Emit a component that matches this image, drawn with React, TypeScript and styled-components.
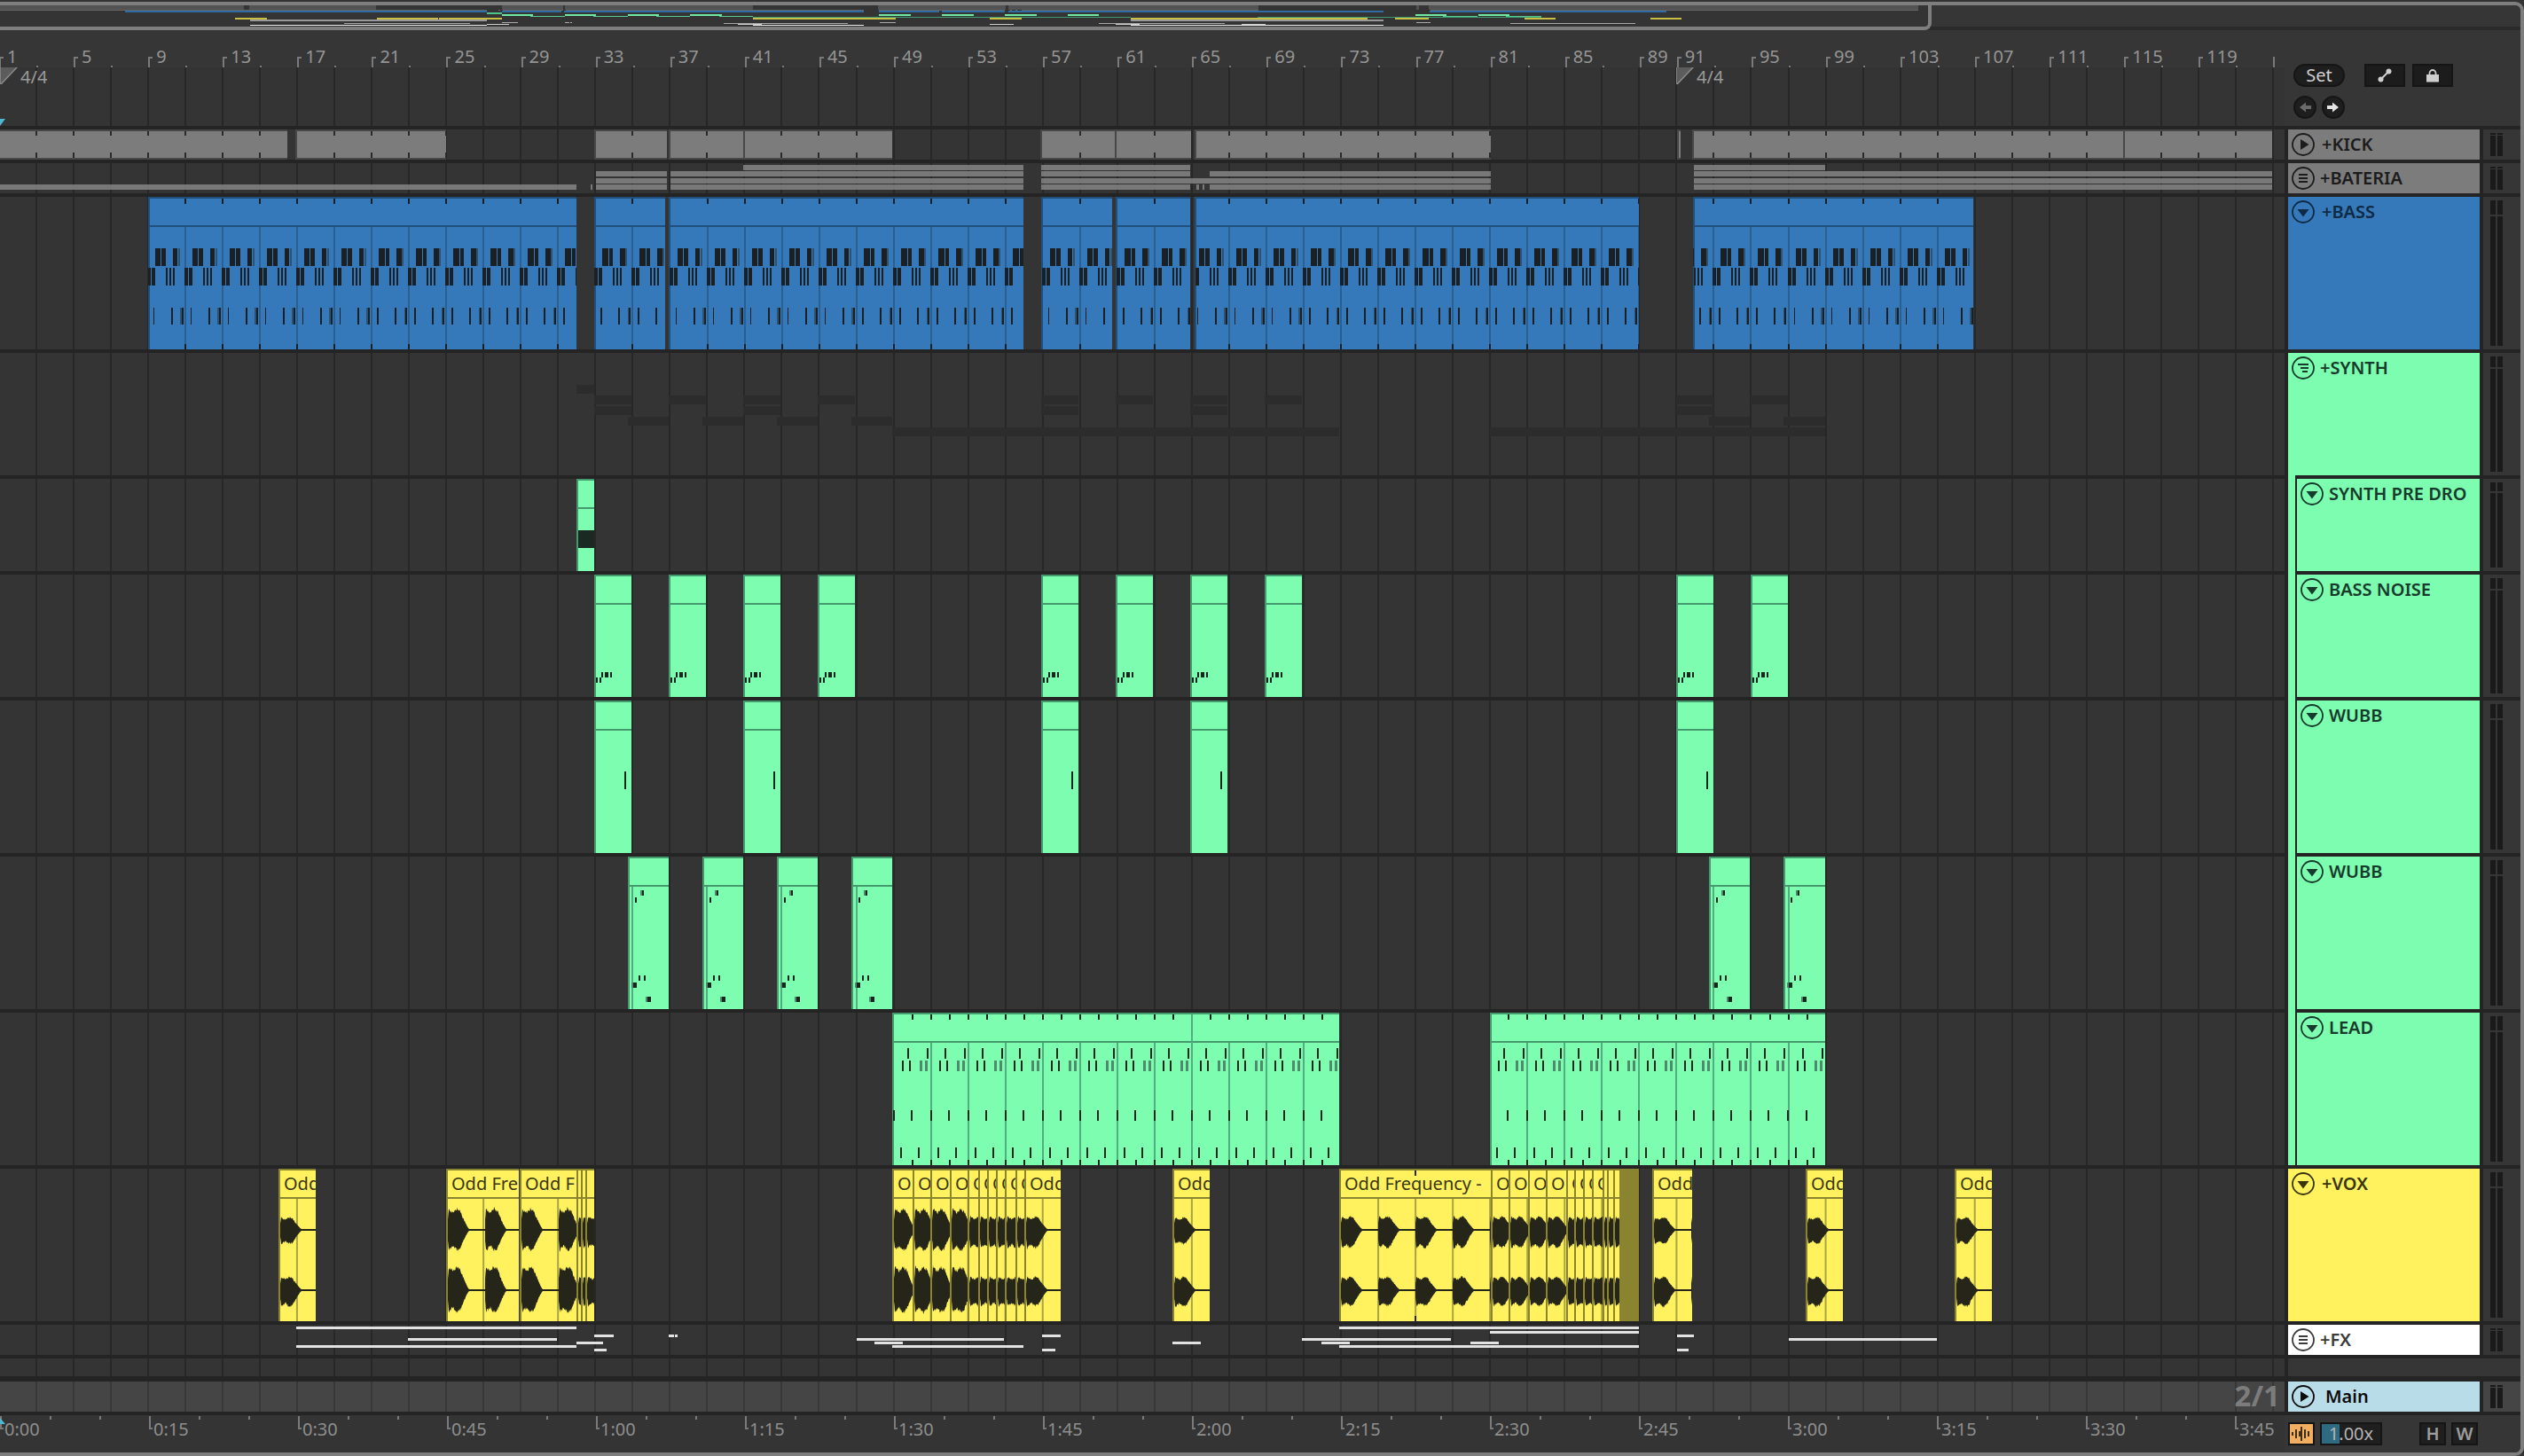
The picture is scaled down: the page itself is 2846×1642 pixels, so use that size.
import React from 'react';
import styled, { createGlobalStyle } from 'styled-components';

const GlobalStyles = createGlobalStyle`
  html, body { margin: 0; padding: 0; background: #333333; }
  body { font-family: "Noto Sans", "Liberation Sans", sans-serif; }
  * { box-sizing: border-box; }
`;

type Tone = 'blue' | 'green' | 'yellow' | 'gray' | 'white' | 'sky';

const tones: Record<Tone, { fill: string; edge: string; line: string; ink: string; dim: string; text: string }> = {
  blue: { fill: '#3679bb', edge: '#1f4f7c', line: '#2a5f92', ink: '#1a2024', dim: '#2d5272', text: '#0f2a44' },
  green: { fill: '#7dfdb0', edge: '#449a6c', line: '#52ad80', ink: '#16261f', dim: '#4f8a6c', text: '#173a2b' },
  yellow: { fill: '#fff25e', edge: '#8a8430', line: '#a9a443', ink: '#25251a', dim: '#6b6a2c', text: '#39360f' },
  gray: { fill: '#7c7c7c', edge: '#454545', line: '#444444', ink: '#2a2a2a', dim: '#555555', text: '#1c1c1c' },
  white: { fill: '#ffffff', edge: '#444444', line: '#444444', ink: '#222222', dim: '#555555', text: '#3c3c3c' },
  sky: { fill: '#b9dde8', edge: '#444444', line: '#444444', ink: '#222222', dim: '#555555', text: '#0c0c0c' },
};

const STEP = 42.04;
const GRID0 = -2.4;
const OV = 0.8443;

const barX = (bar: number) => -1 + (bar - 1) * 21.02;

const Page = styled.div`
  width: 2846px;
  height: 1642px;
  padding-top: 2px;
  background: #333333;
  overflow: hidden;
`;

const Window = styled.div`
  height: 1640px;
  display: flex;
  flex-direction: column;
  border-top: 4px solid #7e7e7e;
  border-right: 4px solid #7e7e7e;
  border-bottom: 4px solid #7e7e7e;
  border-top-right-radius: 10px;
  border-bottom-right-radius: 10px;
  background: #363636;
  overflow: hidden;
`;

const Overview = styled.div`
  height: 28px;
  flex: none;
  display: flex;
  background: #363636;
  border-bottom: 4px solid #2a2a2a;
`;

const OverviewFrame = styled.div`
  width: 2178px;
  height: 28px;
  flex: none;
  background: #343434;
  border-right: 4px solid #7e7e7e;
  border-bottom: 4px solid #7e7e7e;
  border-bottom-right-radius: 8px;
`;

const TopSection = styled.div`
  height: 112px;
  flex: none;
  display: grid;
  grid-template-columns: 2576px 266px;
  padding-bottom: 4px;
  background: #242424;
`;

const TopLeft = styled.div`
  display: flex;
  flex-direction: column;
`;

const BarRuler = styled.div`
  height: 42px;
  position: relative;
  background: #363636;
  overflow: hidden;
`;

const RulerLabel = styled.span.attrs<{ $x: number }>(p => ({ style: { left: p.$x } }))<{ $x: number }>`
  position: absolute;
  top: 15px;
  font-size: 20px;
  line-height: 30px;
  color: #959595;
  white-space: nowrap;
`;

const RulerTick = styled.i.attrs<{ $x: number }>(p => ({ style: { left: p.$x } }))<{ $x: number; $hook?: boolean }>`
  position: absolute;
  bottom: 0;
  width: ${p => (p.$hook ? 5 : 2)}px;
  height: ${p => (p.$hook ? 12 : 2)}px;
  border-left: 2px solid #7a7a7a;
  border-top: ${p => (p.$hook ? '2px solid #7a7a7a' : 'none')};
`;

const LastTick = styled(RulerTick)`
  height: 12px;
`;

const Lane = styled.div<{ $bright?: boolean }>`
  position: relative;
  overflow: hidden;
  background-color: ${p => (p.$bright ? '#454545' : '#343434')};
  background-image: repeating-linear-gradient(
    90deg,
    ${p => (p.$bright ? '#383838' : '#272727')} 0,
    ${p => (p.$bright ? '#383838' : '#272727')} 2px,
    transparent 2px,
    transparent ${STEP}px
  );
  background-position-x: ${GRID0}px;
  background-size: 2568px 100%;
  background-repeat: no-repeat;
`;

const LocatorLane = styled(Lane)`
  flex: 1;
`;

const Signature = styled.div.attrs<{ $x: number }>(p => ({ style: { left: p.$x } }))<{ $x: number }>`
  position: absolute;
  top: -1px;
  display: flex;
  gap: 3px;
  color: #9a9a9a;
  font-size: 20px;
  line-height: 24px;
`;

const PlayMarker = styled.svg`
  position: absolute;
  left: 0;
  top: 58px;
`;

const TimeMarker = styled(PlayMarker)`
  top: 3px;
`;

const TopPanel = styled.div`
  background: #363636;
  padding: 38px 0 0 10px;
  display: flex;
  flex-direction: column;
  gap: 10px;
`;

const PanelRow = styled.div`
  display: flex;
  gap: 6px;
  height: 26px;
`;

const SetButton = styled.div`
  width: 58px;
  height: 26px;
  margin-right: 16px;
  border: 2px solid #151515;
  border-radius: 13px;
  background: #1e1e1e;
  color: #cfcfcf;
  font-size: 20px;
  line-height: 21px;
  text-align: center;
`;

const ViewButton = styled.div`
  width: 46px;
  height: 26px;
  margin-right: 2px;
  display: flex;
  align-items: center;
  justify-content: center;
  border: 2px solid #151515;
  background: #1c1c1c;
`;

const RoundButton = styled.div`
  width: 26px;
  height: 26px;
  border: 2px solid #151515;
  border-radius: 50%;
  background: #1e1e1e;
  display: flex;
  align-items: center;
  justify-content: center;
`;

const Row = styled.div<{ $h: number; $gap?: number }>`
  height: ${p => p.$h + (p.$gap ?? 4)}px;
  flex: none;
  display: grid;
  grid-template-columns: 2576px 216px 42px;
  column-gap: 4px;
  padding-bottom: ${p => p.$gap ?? 4}px;
  background: #242424;
`;

const Head = styled.div<{ $tone: Tone; $child?: boolean; $strip?: boolean; $gap: number }>`
  position: relative;
  display: flex;
  align-items: flex-start;
  gap: ${p => p.$gap}px;
  padding: 4px 0 0 ${p => (p.$child ? 14 : 4)}px;
  background: ${p => tones[p.$tone].fill};
  color: ${p => tones[p.$tone].text};
  font-size: 20px;
  font-weight: 600;
  line-height: 26px;
  white-space: nowrap;

  /* group strip on the left of nested tracks */
  ${p =>
    p.$child &&
    `
    &::before {
      content: '';
      position: absolute;
      left: 8px;
      top: 0;
      bottom: 0;
      width: 2px;
      background: #242424;
    }
  `}
  ${p =>
    p.$strip &&
    `
    &::after {
      content: '';
      position: absolute;
      left: 0;
      bottom: -4px;
      width: 8px;
      height: 4px;
      background: ${tones[p.$tone].fill};
    }
  `}
`;

const MeterCell = styled.div<{ $bright?: boolean }>`
  display: flex;
  gap: 2px;
  padding: 4px 0 4px 8px;
  background: ${p => (p.$bright ? '#454545' : '#363636')};
`;

const MeterBar = styled.div<{ $top: number }>`
  width: 6px;
  display: flex;
  flex-direction: column;
  gap: ${p => (p.$top < 4 ? 1 : 2)}px;

  &::before {
    content: '';
    height: ${p => p.$top}px;
    background: #1a1a1a;
  }
  &::after {
    content: '';
    flex: 1;
    background: #1a1a1a;
  }
`;

const BlankPanel = styled.div`
  grid-column: 2 / 4;
  background: #363636;
`;

const ClipBox = styled.div.attrs<{ $x: number; $w: number }>(p => ({ style: { left: p.$x, width: p.$w } }))<{
  $x: number;
  $w: number;
  $tone: Tone;
}>`
  position: absolute;
  top: 0;
  bottom: 0;
  overflow: hidden;
  background: ${p => tones[p.$tone].fill};
  box-shadow: inset 2px 2px 0 0 ${p => tones[p.$tone].edge};
`;

const DrumClip = styled(ClipBox)`
  box-shadow:
    inset 2px 0 0 0 #484848,
    inset 0 2px 0 0 #484848,
    inset 0 -2px 0 0 #484848;
`;

const MutedClip = styled(ClipBox)`
  background: #8a8430;
  box-shadow: none;
`;

const ClipHeader = styled.div<{ $tone: Tone }>`
  height: 34px;
  padding: 2px 0 0 6px;
  border-bottom: 2px solid ${p => tones[p.$tone].edge};
  color: ${p => tones[p.$tone].text};
  font-size: 20px;
  line-height: 30px;
  white-space: nowrap;
  overflow: hidden;
`;

const Art = styled.svg`
  position: absolute;
  left: 0;
  top: 0;
`;

const NoteBar = styled.i.attrs<{ $x: number; $y: number; $w: number }>(p => ({
  style: { left: p.$x, top: p.$y, width: p.$w },
}))<{ $x: number; $y: number; $w: number; $kind: 'ghost' | 'gray' | 'fx' }>`
  position: absolute;
  height: ${p => (p.$kind === 'ghost' ? 10 : p.$kind === 'gray' ? 6 : 3)}px;
  background: ${p =>
    p.$kind === 'ghost' ? '#2c2c2c' : p.$kind === 'gray' ? 'rgba(136, 136, 136, 0.82)' : '#e2e2e2'};
`;

const BottomRuler = styled.div`
  flex: 1;
  display: grid;
  grid-template-columns: 2576px 266px;
`;

const TimeRuler = styled.div`
  position: relative;
  background: #343434;
  overflow: hidden;
`;

const TimeLabel = styled.span.attrs<{ $x: number }>(p => ({ style: { left: p.$x } }))<{ $x: number }>`
  position: absolute;
  top: 1px;
  font-size: 20px;
  line-height: 30px;
  color: #8e8e8e;
`;

const TimeTick = styled.i.attrs<{ $x: number }>(p => ({ style: { left: p.$x } }))<{ $x: number; $major?: boolean }>`
  position: absolute;
  top: 1px;
  width: ${p => (p.$major ? 4 : 2)}px;
  height: ${p => (p.$major ? 15 : 4)}px;
  border-left: 2px solid #7a7a7a;
  border-bottom: ${p => (p.$major ? '2px solid #7a7a7a' : 'none')};
`;

const BottomPanel = styled.div`
  display: flex;
  gap: 6px;
  padding: 8px 0 0 4px;
  background: #363636;
`;

const ModeButton = styled.div`
  width: 30px;
  height: 26px;
  display: flex;
  align-items: center;
  justify-content: center;
  border: 2px solid #151515;
  background: #f2ae60;
`;

const ZoomField = styled.div`
  position: relative;
  width: 70px;
  height: 26px;
  margin-right: 36px;
  border: 2px solid #151515;
  background: #1f1f1f;
  color: #b4b4b4;
  font-size: 20px;
  line-height: 22px;
  text-align: center;
`;

const ZoomFill = styled.i`
  position: absolute;
  left: 0;
  top: 0;
  bottom: 0;
  width: 20px;
  background: #2e6a80;
`;

const ZoomText = styled.span`
  position: relative;
`;

const KeyButton = styled.div`
  width: 30px;
  height: 26px;
  border: 2px solid #151515;
  background: #1f1f1f;
  color: #9c9c9c;
  font-size: 20px;
  font-weight: 600;
  line-height: 22px;
  text-align: center;
`;

const ScaleBadge = styled.span`
  position: absolute;
  right: 5px;
  top: -1px;
  color: #7c7c7c;
  font-size: 33px;
  font-weight: 700;
  line-height: 34px;
`;

/* ---------- helpers ---------- */

type Span = [number, number];
type NoteRow = { y: number; h: number; notes: [number, number, boolean?][] };

const gridIn = (x: number, w: number, div = 1) => {
  const out: number[] = [];
  for (let k = 0; GRID0 + (k * STEP) / div < x + w; k++) {
    const g = GRID0 + (k * STEP) / div;
    if (g > x + 2) out.push(g - x);
  }
  return out;
};

const Rects = ({ items, fill, y, h, w = 2 }: { items: number[]; fill: string; y: number; h: number; w?: number }) => (
  <>
    {items.map((x, i) => (
      <rect key={i} x={x} y={y} width={w} height={h} fill={fill} />
    ))}
  </>
);

const Pattern = ({ x, w, rows, tone }: { x: number; w: number; rows: NoteRow[]; tone: Tone }) => {
  const rects: React.ReactNode[] = [];
  for (let k = 0; GRID0 + k * STEP < x + w; k++) {
    const g = GRID0 + k * STEP - x;
    if (g + STEP < 0) continue;
    rows.forEach((r, ri) =>
      r.notes.forEach(([a, b, dim], ni) => {
        rects.push(
          <rect
            key={`${k}-${ri}-${ni}`}
            x={g + a}
            y={r.y}
            width={b - a}
            height={r.h}
            fill={dim ? tones[tone].dim : tones[tone].ink}
          />,
        );
      }),
    );
  }
  return <>{rects}</>;
};

const Clip = ({
  x,
  w,
  tone,
  label,
  children,
}: {
  x: number;
  w: number;
  tone: Tone;
  label?: string;
  children?: React.ReactNode;
}) => (
  <ClipBox $x={x} $w={w} $tone={tone}>
    <ClipHeader $tone={tone}>{label}</ClipHeader>
    {children}
  </ClipBox>
);

const jitter = (n: number) => {
  const v = Math.sin(n * 127.1) * 43758.5453;
  return v - Math.floor(v);
};

// one vocal phrase, drawn as a mirrored jagged envelope
const wave = (start: number, cy: number, up: number, down: number, seed: number) => {
  const width = 24;
  const env = (t: number) => {
    if (t < 0.04) return 0.45 + t * 10;
    if (t < 0.25) return 0.95 - (t - 0.04) * 0.9;
    if (t < 0.42) return 0.76 + (t - 0.25) * 1.2;
    if (t < 0.58) return 0.96 - (t - 0.42) * 0.6;
    return 0.86 * Math.pow(Math.max(0, 1 - (t - 0.58) / 0.42), 1.25);
  };
  const top: string[] = [];
  const bottom: string[] = [];
  for (let i = 0; i <= width * 2; i++) {
    const t = i / (width * 2);
    const x = start + i / 2;
    const n1 = 0.82 + 0.18 * jitter(i + seed);
    const n2 = 0.82 + 0.18 * jitter(i + seed * 3 + 9);
    top.push(`${x},${(cy - 1 - env(t) * up * n1).toFixed(1)}`);
    bottom.unshift(`${x},${(cy + 1 + env(t) * down * n2).toFixed(1)}`);
  }
  return `M${top.join(' L')} L${bottom.join(' L')} Z`;
};

const ampSets = {
  big: [26, 25, 29, 27],
  mid: [16, 22, 16, 19],
  small: [15, 17, 16, 20],
};

/* ---------- data ---------- */

const kickClips: Span[] = [
  [-2, 324], [333, 502.5], [670, 752], [754, 838], [838, 1006], [1173, 1257], [1257, 1343], [1347, 1681],
  [1891, 1895], [1908, 2394], [2394, 2562],
];

const bassClips: Span[] = [
  [167, 650], [670, 750], [753.5, 1154], [1174, 1254], [1257.5, 1342], [1347, 1848], [1909, 2225],
];

const bateriaNotes: [number, Span[]][] = [
  [2, [[838, 1154], [1174, 1342], [1910, 2058]]],
  [9, [[672, 752], [756, 1154], [1174, 1342], [1364, 1681], [1910, 2562]]],
  [17, [[672, 752], [756, 1154], [1174, 1681], [1910, 2562]]],
  [24, [[0, 650], [666, 668], [672, 752], [756, 1154], [1174, 1342], [1349, 1352], [1356, 1358], [1364, 1681], [1910, 2562]]],
];

const synthGhosts: [number, Span[]][] = [
  [36, [[650, 670]]],
  [48, [[670, 712], [754, 796], [838, 880], [922, 964], [1174, 1216], [1258, 1300], [1342, 1384], [1426, 1468], [1890, 1932], [1974, 2016]]],
  [60, [[670, 712], [838, 880], [1174, 1216], [1342, 1384], [1890, 1932]]],
  [72, [[708, 754], [792, 838], [876, 922], [960, 1006], [1927, 1973], [2011, 2058]]],
  [84, [[1006, 1510], [1680, 2058]]],
];

const noiseClips: Span[] = [
  [670, 712], [754, 796], [838, 880], [922, 964], [1174, 1216], [1258, 1300], [1342, 1384], [1426, 1468], [1890, 1932], [1974, 2016],
];

const wubbClips: Span[] = [[670, 712], [838, 880], [1174, 1216], [1342, 1384], [1890, 1932]];

const wubbTwoClips: Span[] = [[708, 754], [792, 838], [876, 922], [960, 1006], [1927, 1973], [2011, 2058]];

const leadClips: Span[] = [[1006, 1510], [1680, 2058]];

type VoxClip = { x: number; to: number; label: string; amp: keyof typeof ampSets };

const voxClips: VoxClip[] = [
  { x: 314, to: 356, label: 'Odd', amp: 'small' },
  { x: 503, to: 585, label: 'Odd Fre', amp: 'big' },
  { x: 586, to: 650, label: 'Odd F', amp: 'big' },
  { x: 650, to: 655, label: '', amp: 'mid' },
  { x: 655, to: 660, label: '', amp: 'mid' },
  { x: 660, to: 670, label: '', amp: 'mid' },
  { x: 1006, to: 1029, label: 'O', amp: 'big' },
  { x: 1029, to: 1049, label: 'O', amp: 'big' },
  { x: 1049, to: 1071, label: 'O', amp: 'big' },
  { x: 1071, to: 1091, label: 'O', amp: 'big' },
  { x: 1091, to: 1103, label: 'O', amp: 'mid' },
  { x: 1103, to: 1113, label: 'O', amp: 'mid' },
  { x: 1113, to: 1123, label: 'O', amp: 'mid' },
  { x: 1123, to: 1133, label: 'O', amp: 'mid' },
  { x: 1133, to: 1145, label: 'O', amp: 'mid' },
  { x: 1145, to: 1155, label: 'O', amp: 'mid' },
  { x: 1155, to: 1196, label: 'Odd', amp: 'mid' },
  { x: 1322, to: 1364, label: 'Odd', amp: 'small' },
  { x: 1510, to: 1681, label: 'Odd Frequency -', amp: 'mid' },
  { x: 1681, to: 1701, label: 'O', amp: 'mid' },
  { x: 1701, to: 1723, label: 'O', amp: 'mid' },
  { x: 1723, to: 1743, label: 'O', amp: 'mid' },
  { x: 1743, to: 1766, label: 'O', amp: 'mid' },
  { x: 1766, to: 1775, label: 'O', amp: 'mid' },
  { x: 1775, to: 1785, label: 'O', amp: 'mid' },
  { x: 1785, to: 1795, label: 'O', amp: 'mid' },
  { x: 1795, to: 1807, label: 'O', amp: 'mid' },
  { x: 1807, to: 1812, label: '', amp: 'mid' },
  { x: 1812, to: 1819, label: '', amp: 'mid' },
  { x: 1819, to: 1826, label: '', amp: 'mid' },
  { x: 1863, to: 1908, label: 'Odd', amp: 'small' },
  { x: 2036, to: 2078, label: 'Odd', amp: 'small' },
  { x: 2204, to: 2246, label: 'Odd', amp: 'small' },
];

const fxNotes: [number, Span[]][] = [
  [2, [[334, 650], [1510, 1848]]],
  [7, [[1680, 1848]]],
  [11, [[670, 692], [754, 760], [761, 764], [1175, 1196], [1891, 1910]]],
  [15, [[460, 628], [966, 1132], [1468, 1636], [2017, 2184]]],
  [19, [[650, 680], [986, 1018], [1322, 1354], [1490, 1522], [1658, 1690]]],
  [23, [[334, 650], [1006, 1154], [1510, 1848]]],
  [27, [[670, 684], [1175, 1190], [1891, 1904]]],
];

const bassRows: NoteRow[] = [
  { y: 58, h: 20, notes: [[9, 15.5], [16.5, 21], [29, 34.5], [35, 37, true]] },
  { y: 80, h: 20, notes: [[0, 4], [5, 9], [21, 23], [25, 27], [29, 31]] },
  { y: 125, h: 19, notes: [[7, 8.5], [27, 29], [37.5, 39, true], [39, 41]] },
];

const leadRows: NoteRow[] = [
  { y: 40, h: 12, notes: [[16, 18], [38, 40]] },
  { y: 54, h: 12, notes: [[10, 12], [18, 20], [30, 33, true], [36, 39, true]] },
  { y: 110, h: 12, notes: [[20, 22], [42, 44]] },
  { y: 152, h: 12, notes: [[8, 10], [28, 30]] },
];

const wubbTwoRows: NoteRow[] = [
  { y: 38, h: 6, notes: [[14, 16, true], [16, 18]] },
  { y: 46, h: 6, notes: [[8, 10]] },
  { y: 134, h: 6, notes: [[12, 14], [18, 20]] },
  { y: 142, h: 6, notes: [[4, 6, true], [6, 10]] },
  { y: 158, h: 6, notes: [[20, 22, true], [22, 26]] },
];

/* ---------- small drawings ---------- */

const IconSvg = styled.svg`
  flex: none;
`;

const TrackIcon = ({ kind }: { kind: 'play' | 'list' | 'down' | 'taper' }) => (
  <IconSvg width="26" height="26" viewBox="0 0 26 26">
    <circle cx="13" cy="13" r="12" fill="none" stroke="currentColor" strokeWidth="1.8" />
    {kind === 'play' && <path d="M10 7 L19.5 13 L10 19 Z" fill="currentColor" />}
    {kind === 'down' && <path d="M6.5 10 H19.5 L13 18.5 Z" fill="currentColor" />}
    {kind === 'list' && <path d="M8 8 H18 V10 H8 Z M8 12 H18 V14 H8 Z M8 16 H18 V18 H8 Z" fill="currentColor" />}
    {kind === 'taper' && <path d="M7 8 H19 V10 H7 Z M10 12 H19 V14 H10 Z M12 16 H18 V18 H12 Z" fill="currentColor" />}
  </IconSvg>
);

const Meter = ({ h, bright }: { h: number; bright?: boolean }) => {
  const top = h >= 172 ? 16 : h >= 138 ? 12 : h >= 104 ? 10 : 2;
  return (
    <MeterCell $bright={bright}>
      <MeterBar $top={top} />
      <MeterBar $top={top} />
    </MeterCell>
  );
};

const SignatureMark = ({ x }: { x: number }) => (
  <Signature $x={x}>
    <IconSvg width="20" height="20" viewBox="0 0 20 20">
      <path d="M0 0 H20 L1 20 H0 Z" fill="#5c5c5c" stroke="#8c8c8c" strokeWidth="1.5" />
    </IconSvg>
    <span>4/4</span>
  </Signature>
);

const OverviewSvg = styled.svg`
  display: block;
`;

const OverviewMap = () => {
  const band = (spans: Span[], y: number, h: number, fill: string, key: string) =>
    spans.map(([a, b], i) => (
      <rect key={`${key}${i}`} x={Math.max(a, 0) * OV} y={y - 6} width={Math.max((b - a) * OV, 1)} height={h} fill={fill} />
    ));
  return (
    <OverviewSvg width="2174" height="24" viewBox="0 0 2174 24" shapeRendering="crispEdges">
      {band(kickClips, 6, 5, '#525252', 'k')}
      {band(bateriaNotes[3][1], 11, 1, '#666666', 'b')}
      {band(bassClips, 12, 2, '#2e6ca3', 'ba')}
      {band([[650, 670]], 14, 1.5, '#4fc488', 'p')}
      {band(noiseClips, 15.5, 2.5, '#6fe8a2', 'n')}
      {band(wubbTwoClips, 18, 1, '#56c98e', 'w')}
      {band(leadClips, 19, 1, '#3f9a72', 'l')}
      {band(voxClips.map(c => [c.x, c.to] as Span), 20, 2, '#c9bf45', 'v')}
      {band(fxNotes[0][1], 22, 2, '#9a9a9a', 'f0')}
      {band(fxNotes[2][1], 24.5, 1, '#aaaaaa', 'f1')}
      {band(fxNotes[3][1], 25.5, 1.5, '#a6a6a6', 'f2')}
      {band(fxNotes[4][1], 26.5, 1, '#cccccc', 'f3')}
      {band(fxNotes[5][1], 27.7, 1.5, '#eeeeee', 'f4')}
    </OverviewSvg>
  );
};

/* ---------- lanes ---------- */

const KickLane = () => (
  <Lane>
    {kickClips.map(([a, b], i) => (
      <DrumClip key={i} $x={a} $w={b - a} $tone="gray">
        <Art width={b - a} height={34} shapeRendering="crispEdges">
          <Rects items={gridIn(a, b - a)} fill="#2a2a2a" y={2} h={5} />
          <Rects items={gridIn(a, b - a)} fill="#2a2a2a" y={26} h={6} />
        </Art>
      </DrumClip>
    ))}
  </Lane>
);

const BateriaLane = () => (
  <Lane>
    {bateriaNotes.map(([y, spans]) =>
      spans.map(([a, b]) => <NoteBar key={`${y}-${a}`} $kind="gray" $x={a} $y={y} $w={b - a} />),
    )}
  </Lane>
);

const BassLane = () => (
  <Lane>
    {bassClips.map(([a, b], i) => (
      <Clip key={i} x={a} w={b - a} tone="blue">
        <Art width={b - a} height={172} shapeRendering="crispEdges">
          <Rects items={gridIn(a, b - a)} fill={tones.blue.line} y={34} h={138} />
          <Rects items={gridIn(a, b - a)} fill={tones.blue.ink} y={2} h={6} />
          <Rects items={gridIn(a, b - a)} fill={tones.blue.ink} y={166} h={6} />
          <Pattern x={a} w={b - a} rows={bassRows} tone="blue" />
        </Art>
      </Clip>
    ))}
  </Lane>
);

const SynthLane = () => (
  <Lane>
    {synthGhosts.map(([y, spans]) =>
      spans.map(([a, b]) => <NoteBar key={`${y}-${a}`} $kind="ghost" $x={a} $y={y} $w={b - a} />),
    )}
  </Lane>
);

const PreDropLane = () => (
  <Lane>
    <Clip x={650} w={20} tone="green">
      <Art width={20} height={104} shapeRendering="crispEdges">
        <rect x={2} y={58} width={18} height={20} fill="#1a2a22" />
      </Art>
    </Clip>
  </Lane>
);

const NoiseLane = () => (
  <Lane>
    {noiseClips.map(([a, b], i) => (
      <Clip key={i} x={a} w={b - a} tone="green">
        <Art width={b - a} height={138} shapeRendering="crispEdges">
          {[[8, 2], [12, 4], [18, 2]].map(([nx, nw]) => (
            <rect key={nx} x={nx} y={110} width={nw} height={6} fill={tones.green.ink} />
          ))}
          {[[2, 2], [6, 2]].map(([nx, nw]) => (
            <rect key={nx} x={nx} y={116} width={nw} height={6} fill={tones.green.ink} />
          ))}
        </Art>
      </Clip>
    ))}
  </Lane>
);

const WubbLane = () => (
  <Lane>
    {wubbClips.map(([a, b], i) => (
      <Clip key={i} x={a} w={b - a} tone="green">
        <Art width={b - a} height={172} shapeRendering="crispEdges">
          <rect x={34} y={80} width={2} height={20} fill={tones.green.ink} />
        </Art>
      </Clip>
    ))}
  </Lane>
);

const WubbTwoLane = () => (
  <Lane>
    {wubbTwoClips.map(([a, b], i) => (
      <Clip key={i} x={a} w={b - a} tone="green">
        <Art width={b - a} height={172} shapeRendering="crispEdges">
          <Rects items={gridIn(a, b - a)} fill={tones.green.line} y={34} h={138} />
          {wubbTwoRows.map(r =>
            r.notes.map(([na, nb, dim]) => (
              <rect
                key={`${r.y}-${na}`}
                x={na}
                y={r.y}
                width={nb - na}
                height={r.h}
                fill={dim ? tones.green.dim : tones.green.ink}
              />
            )),
          )}
        </Art>
      </Clip>
    ))}
  </Lane>
);

const LeadLane = () => (
  <Lane>
    {leadClips.map(([a, b], i) => (
      <Clip key={i} x={a} w={b - a} tone="green">
        <Art width={b - a} height={172} shapeRendering="crispEdges">
          <Rects items={gridIn(a, b - a)} fill={tones.green.line} y={34} h={138} />
          <Rects items={gridIn(a, b - a, 2)} fill={tones.green.ink} y={2} h={6} />
          <Rects items={gridIn(a, b - a, 2)} fill={tones.green.ink} y={166} h={6} />
          {i === 0 && <rect x={337} y={2} width={2} height={32} fill={tones.green.line} />}
          <Pattern x={a} w={b - a} rows={leadRows} tone="green" />
        </Art>
      </Clip>
    ))}
  </Lane>
);

const VoxLane = () => (
  <Lane>
    {voxClips.map((c, i) => {
      const w = c.to - c.x;
      const [a, b, d, e] = ampSets[c.amp];
      const starts: number[] = [];
      for (let s = 2; s < w; s += 42) starts.push(s);
      return (
        <Clip key={i} x={c.x} w={w} tone="yellow" label={c.label}>
          <Art width={w} height={172}>
            <Rects items={gridIn(c.x, w)} fill={tones.yellow.line} y={34} h={138} />
            <rect x={2} y={68} width={w} height={2} fill={tones.yellow.ink} />
            <rect x={2} y={136} width={w} height={2} fill={tones.yellow.ink} />
            {starts.map(s => (
              <React.Fragment key={s}>
                <path d={wave(s, 69, a, b, s + i)} fill={tones.yellow.ink} />
                <path d={wave(s, 137, d, e, s + i + 3)} fill={tones.yellow.ink} />
              </React.Fragment>
            ))}
            {w > 160 && <rect x={85} y={2} width={2} height={6} fill={tones.yellow.ink} />}
            {w > 160 && <rect x={85} y={166} width={2} height={6} fill={tones.yellow.ink} />}
          </Art>
        </Clip>
      );
    })}
    <MutedClip $x={1826} $w={22} $tone="yellow" />
  </Lane>
);

const FxLane = () => (
  <Lane>
    {fxNotes.map(([y, spans]) =>
      spans.map(([a, b]) => <NoteBar key={`${y}-${a}`} $kind="fx" $x={a} $y={y} $w={b - a} />),
    )}
  </Lane>
);

type Track = {
  name: string;
  h: number;
  tone: Tone;
  icon: 'play' | 'list' | 'down' | 'taper';
  lane: React.ReactNode;
  child?: boolean;
  strip?: boolean;
  gap?: number;
};

const tracks: Track[] = [
  { name: '+KICK', h: 34, tone: 'gray', icon: 'play', lane: <KickLane /> },
  { name: '+BATERIA', h: 34, tone: 'gray', icon: 'list', lane: <BateriaLane />, gap: 6 },
  { name: '+BASS', h: 172, tone: 'blue', icon: 'down', lane: <BassLane /> },
  { name: '+SYNTH', h: 138, tone: 'green', icon: 'taper', lane: <SynthLane />, gap: 6, strip: true },
  { name: 'SYNTH PRE DRO', h: 104, tone: 'green', icon: 'down', lane: <PreDropLane />, child: true, strip: true, gap: 6 },
  { name: 'BASS NOISE', h: 138, tone: 'green', icon: 'down', lane: <NoiseLane />, child: true, strip: true, gap: 6 },
  { name: 'WUBB', h: 172, tone: 'green', icon: 'down', lane: <WubbLane />, child: true, strip: true, gap: 6 },
  { name: 'WUBB', h: 172, tone: 'green', icon: 'down', lane: <WubbTwoLane />, child: true, strip: true, gap: 6 },
  { name: 'LEAD', h: 172, tone: 'green', icon: 'down', lane: <LeadLane />, child: true, gap: 6 },
  { name: '+VOX', h: 172, tone: 'yellow', icon: 'down', lane: <VoxLane /> },
  { name: '+FX', h: 34, tone: 'white', icon: 'list', lane: <FxLane />, gap: 6 },
];

const bars = Array.from({ length: 61 }, (_, i) => i * 2 + 1);
const labelled = (b: number) => (b < 91 ? (b - 1) % 4 === 0 : (b - 91) % 4 === 0);

const times = Array.from({ length: 16 }, (_, i) => {
  const s = i * 15;
  return { label: `${Math.floor(s / 60)}:${String(s % 60).padStart(2, '0')}`, x: i * 168 };
});

function App(): any {
  return (
    <Page>
      <GlobalStyles />
      <Window>
        <Overview>
          <OverviewFrame>
            <OverviewMap />
          </OverviewFrame>
        </Overview>

        <TopSection>
          <TopLeft>
            <BarRuler>
              {bars.map(b => (
                <React.Fragment key={b}>
                  <RulerTick $x={barX(b)} $hook={labelled(b)} />
                  {labelled(b) && <RulerLabel $x={barX(b) + 9}>{b}</RulerLabel>}
                </React.Fragment>
              ))}
              <LastTick $x={2563} />
            </BarRuler>
            <LocatorLane>
              <SignatureMark x={0} />
              <SignatureMark x={1890} />
              <PlayMarker width="6" height="8" viewBox="0 0 6 8">
                <path d="M0 0 H6 L0 8 Z" fill="#4db8d0" />
              </PlayMarker>
            </LocatorLane>
          </TopLeft>
          <TopPanel>
            <PanelRow>
              <SetButton>Set</SetButton>
              <ViewButton>
                <svg width="16" height="16" viewBox="0 0 16 16">
                  <path d="M3.5 12.5 L12.5 3.5" stroke="#cfcfcf" strokeWidth="2" />
                  <circle cx="3.5" cy="12.5" r="3" fill="#cfcfcf" />
                  <circle cx="12.5" cy="3.5" r="3" fill="#cfcfcf" />
                </svg>
              </ViewButton>
              <ViewButton>
                <svg width="16" height="16" viewBox="0 0 16 16">
                  <path d="M4.5 8 V5.5 a3.5 3.5 0 0 1 7 0 V8" fill="none" stroke="#cfcfcf" strokeWidth="1.8" />
                  <rect x="1" y="7" width="14" height="8.5" fill="#cfcfcf" />
                </svg>
              </ViewButton>
            </PanelRow>
            <PanelRow>
              <RoundButton>
                <svg width="22" height="22" viewBox="2 2 22 22">
                  <path d="M20 11 H14 V7.5 L7 13 L14 18.5 V15 H20 Z" fill="#6b6b6b" />
                </svg>
              </RoundButton>
              <RoundButton>
                <svg width="22" height="22" viewBox="2 2 22 22">
                  <path d="M6 11 H12 V7.5 L19 13 L12 18.5 V15 H6 Z" fill="#e4e4e4" />
                </svg>
              </RoundButton>
            </PanelRow>
          </TopPanel>
        </TopSection>

        {tracks.map((t, i) => (
          <Row key={i} $h={t.h}>
            {t.lane}
            <Head $tone={t.tone} $child={t.child} $strip={t.strip} $gap={t.gap ?? 8}>
              <TrackIcon kind={t.icon} />
              <span>{t.name}</span>
            </Head>
            <Meter h={t.h} />
          </Row>
        ))}

        <Row $h={20} $gap={6}>
          <Lane />
          <BlankPanel />
        </Row>

        <Row $h={34}>
          <Lane $bright>
            <ScaleBadge>2/1</ScaleBadge>
          </Lane>
          <Head $tone="sky" $gap={12}>
            <TrackIcon kind="play" />
            <span>Main</span>
          </Head>
          <Meter h={34} bright />
        </Row>

        <BottomRuler>
          <TimeRuler>
            {Array.from({ length: 46 }, (_, i) => (
              <TimeTick key={i} $x={i * 56 - 0.5} $major={i % 3 === 0} />
            ))}
            {times.map(t => (
              <TimeLabel key={t.label} $x={t.x + 5}>
                {t.label}
              </TimeLabel>
            ))}
            <TimeMarker width="6" height="7" viewBox="0 0 6 7">
              <path d="M0 0 L6 7 H0 Z" fill="#4db8d0" />
            </TimeMarker>
          </TimeRuler>
          <BottomPanel>
            <ModeButton>
              <svg width="22" height="18" viewBox="0 0 22 18">
                <path
                  d="M1 7 V11 M5 4 V14 M9 6 V12 M11 1 V17 M15 4 V14 M19 6 V12"
                  stroke="#2a2216"
                  strokeWidth="1.8"
                  fill="none"
                />
              </svg>
            </ModeButton>
            <ZoomField>
              <ZoomFill />
              <ZoomText>1.00x</ZoomText>
            </ZoomField>
            <KeyButton>H</KeyButton>
            <KeyButton>W</KeyButton>
          </BottomPanel>
        </BottomRuler>
      </Window>
    </Page>
  );
}

export default App;
